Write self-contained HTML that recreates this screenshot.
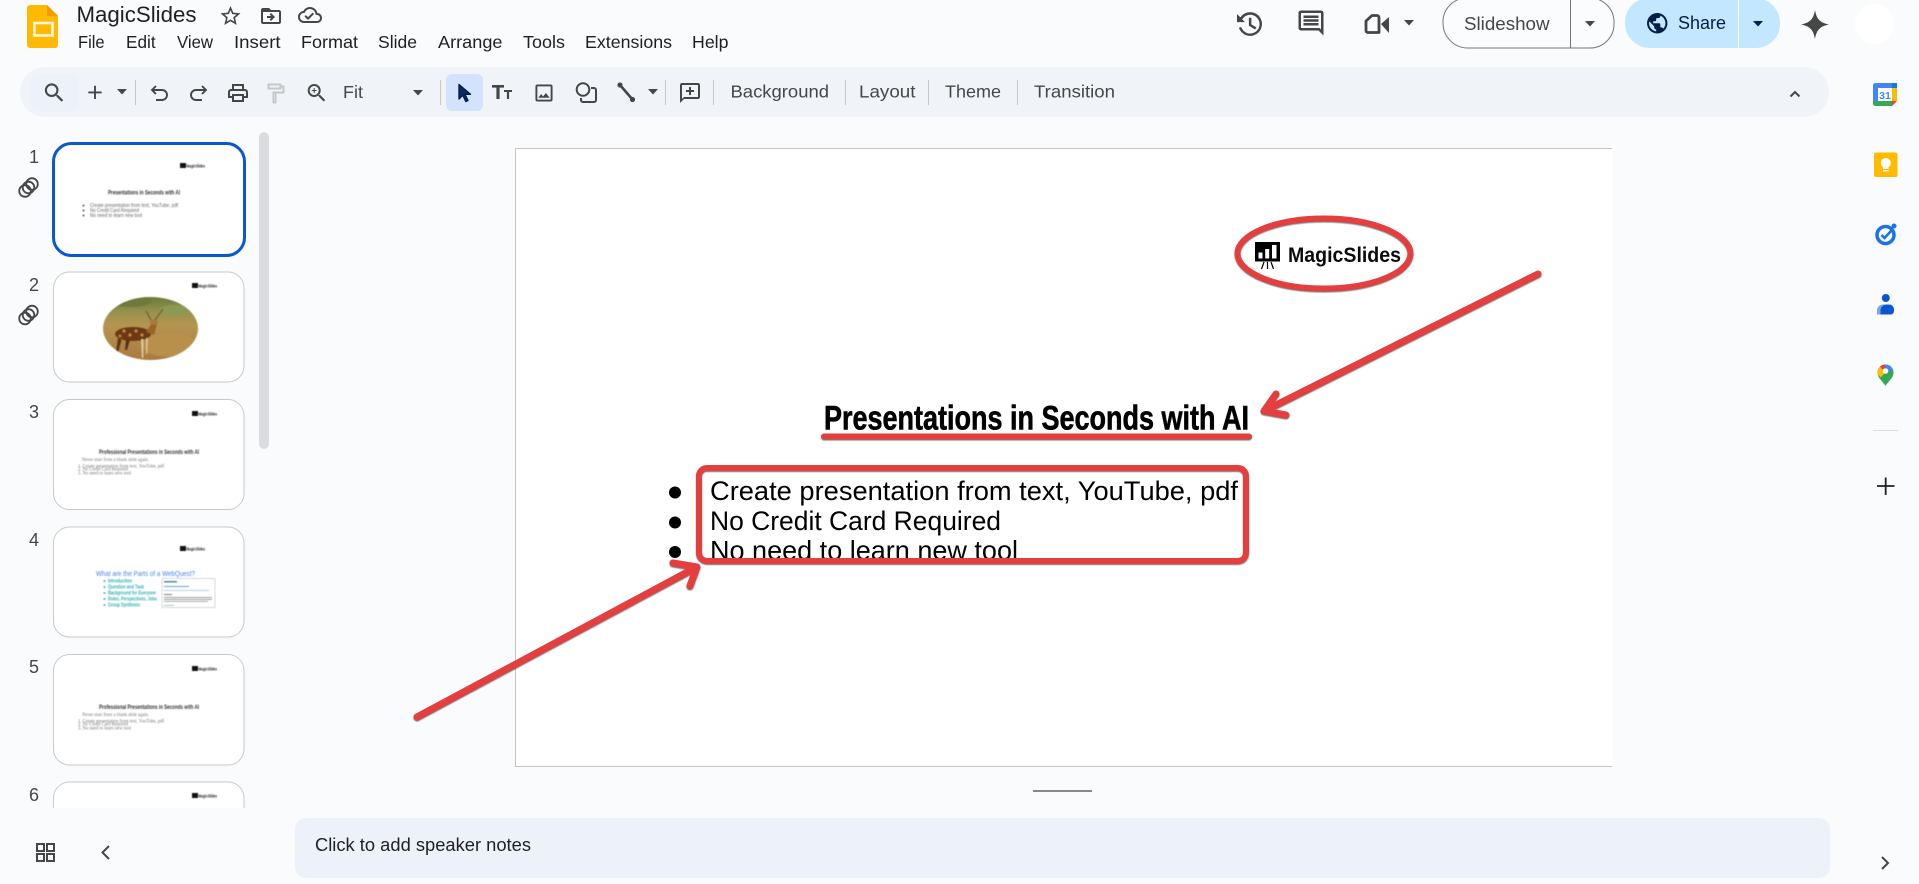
<!DOCTYPE html>
<html lang="en"><head><meta charset="utf-8"><title>MagicSlides - Google Slides</title>
<style>
html,body{margin:0;padding:0;background:#f9fbfd;width:1919px;height:884px;overflow:hidden}
svg{display:block;font-family:"Liberation Sans",Arial,sans-serif}
.m{font-size:17.500px;fill:#1f1f1f}
.t{font-size:17.500px;fill:#444746}
.i{fill:#444746}
.n{font-size:18px;fill:#444746;text-anchor:end}
.s{fill:none;stroke:#444746;stroke-width:2}
.r{filter:drop-shadow(0 1px .6px rgba(0,0,0,.55))}
.red{fill:none;stroke:#e53e3e;stroke-linecap:round;stroke-linejoin:round}
.th{fill:#fff;stroke:#c7c9cb;stroke-width:1}
.b{filter:blur(.4px)}
.lg{font-size:4.600px;font-weight:700;fill:#222}
.tt{font-weight:700;font-size:6.500px;fill:#333}
.tx{font-size:5.600px;fill:#666}
.sf{font-family:"Liberation Serif",serif;font-size:5.600px;fill:#777}
.tl{font-size:5px;fill:#2fb0b5;font-weight:700}
.sp{stroke:#c7c7c7;stroke-width:1}
</style></head><body>
<svg width="1919" height="884" viewBox="0 0 1919 884" xmlns="http://www.w3.org/2000/svg">
<rect width="1919" height="884" fill="#f9fbfd"/>

<!-- Logo -->
<path d="M30 5h17l11 11v29a3 3 0 0 1-3 3H30a3 3 0 0 1-3-3V8a3 3 0 0 1 3-3z" fill="#ffb900"/>
<path d="M47 5l11 11H47z" fill="#f29900"/>
<rect x="34.500" y="23" width="18" height="12.500" fill="none" stroke="#fff6dc" stroke-width="2.600"/>

<!-- Title and menu -->
<text x="76.500" y="22" font-size="22.500" fill="#1f1f1f" textLength="120" lengthAdjust="spacingAndGlyphs">MagicSlides</text>
<path transform="translate(218.500,4)" class="i" d="M22 9.240l-7.190-.62L12 2 9.190 8.630 2 9.240l5.460 4.730L5.820 21 12 17.270 18.180 21l-1.630-7.030L22 9.240zM12 15.400l-3.760 2.270 1-4.280-3.320-2.880 4.380-.38L12 6.100l1.710 4.040 4.380.38-3.320 2.880 1 4.280L12 15.400z"/>
<path transform="translate(259,4)" class="i" d="M20 6h-8l-2-2H4c-1.100 0-1.990.9-1.990 2L2 18c0 1.100.9 2 2 2h16c1.100 0 2-.9 2-2V8c0-1.100-.9-2-2-2zm0 12H4V8h16v10zm-8.010-9l-1.410 1.410L12.160 12H8v2h4.160l-1.590 1.590L11.990 17 16 13.010 11.990 9z"/>
<path transform="translate(298,3)" class="i" d="M19.350 10.040C18.670 6.590 15.640 4 12 4 9.110 4 6.600 5.640 5.350 8.040 2.340 8.360 0 10.910 0 14c0 3.310 2.690 6 6 6h13c2.760 0 5-2.240 5-5 0-2.640-2.050-4.780-4.650-4.960zM19 18H6c-2.210 0-4-1.790-4-4 0-2.050 1.530-3.760 3.560-3.970l1.070-.11.5-.95C8.080 7.140 9.940 6 12 6c2.620 0 4.880 1.860 5.390 4.430l.3 1.500 1.530.11c1.560.1 2.780 1.410 2.780 2.960 0 1.650-1.350 3-3 3zm-9-3.820l-2.090-2.090L6.500 13.500 10 17l6.010-6.010-1.410-1.410z"/>
<text class="m" x="78" y="48" textLength="26.600" lengthAdjust="spacingAndGlyphs">File</text>
<text class="m" x="126" y="48" textLength="29.600" lengthAdjust="spacingAndGlyphs">Edit</text>
<text class="m" x="177" y="48" textLength="36" lengthAdjust="spacingAndGlyphs">View</text>
<text class="m" x="234" y="48" textLength="46.600" lengthAdjust="spacingAndGlyphs">Insert</text>
<text class="m" x="301" y="48" textLength="57" lengthAdjust="spacingAndGlyphs">Format</text>
<text class="m" x="378" y="48" textLength="39" lengthAdjust="spacingAndGlyphs">Slide</text>
<text class="m" x="438" y="48" textLength="64.500" lengthAdjust="spacingAndGlyphs">Arrange</text>
<text class="m" x="523" y="48" textLength="42" lengthAdjust="spacingAndGlyphs">Tools</text>
<text class="m" x="585" y="48" textLength="87" lengthAdjust="spacingAndGlyphs">Extensions</text>
<text class="m" x="692" y="48" textLength="36.500" lengthAdjust="spacingAndGlyphs">Help</text>

<!-- Top right -->
<path transform="translate(1234.500,9) scale(1.25)" class="i" d="M12.500 2.500a9.500 9.500 0 1 1-9 12.500l1.900-.6a7.500 7.500 0 1 0 .7-6.100L8.500 10.500H2V4l2.700 2.700A9.500 9.500 0 0 1 12.500 2.500zM11.500 7h2v5.300l4 2.400-1 1.700-5-3z"/>
<path transform="translate(1296,8) scale(1.25)" class="i" d="M20 2H4c-1.100 0-2 .9-2 2v12c0 1.100.9 2 2 2h14l4 4V4c0-1.100-.9-2-2-2zm0 15.170L18.830 16H4V4h16v13.170zM6 12h12v2H6zm0-3h12v2H6zm0-3h12v2H6z"/>
<path d="M1372 15.500h5a2 2 0 0 1 2 2v15h-11a2 2 0 0 1-2-2V21z" fill="none" stroke="#444746" stroke-width="2.800" stroke-linejoin="round"/>
<path d="M1381 24l8-7v16z" fill="#444746"/>
<path d="M1404 20h10l-5 5.500z" fill="#444746"/>
<path d="M1468-2h122a24 24 0 0 1 24 24v2a24 24 0 0 1-24 24h-122a25 25 0 0 1-25-25v-1a24 24 0 0 1 25-24z" fill="#fbfcfe" stroke="#747775" stroke-width="1"/>
<line x1="1570.500" y1="-2" x2="1570.500" y2="48" stroke="#747775" stroke-width="1"/>
<text x="1464" y="30" font-size="18" fill="#444746" textLength="85.500" lengthAdjust="spacingAndGlyphs">Slideshow</text>
<path d="M1585 21h10l-5 5.500z" fill="#444746"/>
<path d="M1650-2h105a25 25 0 0 1 25 25v1a24 24 0 0 1-24 24h-106a25 25 0 0 1-25-25v-1a24 24 0 0 1 25-24z" fill="#c2e7ff"/>
<line x1="1738.500" y1="-2" x2="1738.500" y2="48" stroke="#f9fbfd" stroke-width="1"/>
<path transform="translate(1645,11) scale(1.02)" fill="#041e49" d="M12 2C6.480 2 2 6.480 2 12s4.480 10 10 10 10-4.480 10-10S17.520 2 12 2zm-1 17.930c-3.950-.49-7-3.850-7-7.930 0-.62.08-1.210.21-1.790L9 15v1c0 1.100.9 2 2 2v1.930zm6.900-2.540c-.26-.81-1-1.390-1.900-1.390h-1v-3c0-.55-.45-1-1-1H8v-2h2c.55 0 1-.45 1-1V7h2c1.100 0 2-.9 2-2v-.41c2.930 1.190 5 4.060 5 7.410 0 2.080-.8 3.970-2.100 5.390z"/>
<text x="1678" y="29" font-size="18" fill="#041e49" textLength="48" lengthAdjust="spacingAndGlyphs">Share</text>
<path d="M1753 21h10l-5 5.500z" fill="#041e49"/>
<path d="M1815 10c1.500 9 5 12.800 14 14.500-9 1.700-12.500 5.500-14 14.500-1.500-9-5-12.800-14-14.500 9-1.700 12.500-5.500 14-14.500z" fill="#444746"/>
<ellipse cx="1874.500" cy="24" rx="19.500" ry="20" fill="#fff"/>

<!-- Toolbar -->
<rect x="20" y="67" width="1809" height="50" rx="25" fill="#f0f4f9"/>
<rect x="31" y="74" width="48" height="37" rx="6" fill="#edf2fa"/>
<path transform="translate(41.700,80.200) scale(1.05)" class="i" d="M15.500 14h-.79l-.28-.27A6.471 6.471 0 0 0 16 9.500 6.500 6.500 0 1 0 9.500 16c1.610 0 3.090-.59 4.230-1.570l.27.28v.79l5 4.990L20.490 19l-4.990-5zm-6 0C7.010 14 5 11.990 5 9.500S7.010 5 9.500 5 14 7.010 14 9.500 11.990 14 9.500 14z"/>
<path transform="translate(83.600,81) scale(.95)" class="i" d="M19 13h-6v6h-2v-6H5v-2h6V5h2v6h6v2z"/>
<path d="M117 89h10l-5 5.500z" class="i"/>
<line x1="135.500" y1="80" x2="135.500" y2="105" class="sp"/>
<path d="M156 86l-4 4 4 4M152 90h10a5 5 0 0 1 0 10h-6" fill="none" stroke="#444746" stroke-width="1.900"/>
<path d="M202 86l4 4-4 4M206 90h-10a5 5 0 0 0 0 10h6" fill="none" stroke="#444746" stroke-width="1.900"/>
<path transform="translate(226,81)" class="i" d="M19 8h-1V3H6v5H5c-1.660 0-3 1.340-3 3v6h4v4h12v-4h4v-6c0-1.660-1.340-3-3-3zM8 5h8v3H8V5zm8 12v2H8v-4h8v2zm2-2v-2H6v2H4v-4c0-.55.45-1 1-1h14c.55 0 1 .45 1 1v4h-2z"/>
<path transform="translate(263.500,81.500)" fill="#c4c7c5" d="M18 4V3c0-.55-.45-1-1-1H5c-.55 0-1 .45-1 1v4c0 .55.45 1 1 1h12c.55 0 1-.45 1-1V6h1v4H9v11c0 .55.45 1 1 1h2c.55 0 1-.45 1-1v-9h8V4h-3zM16 6H6V4h10v2zM11 20h-.5v-8h.5z"/>
<path transform="translate(304.700,81)" class="i" d="M15.500 14h-.79l-.28-.27A6.471 6.471 0 0 0 16 9.500 6.500 6.500 0 1 0 9.500 16c1.610 0 3.090-.59 4.230-1.570l.27.28v.79l5 4.990L20.490 19l-4.990-5zm-6 0C7.010 14 5 11.990 5 9.500S7.010 5 9.500 5 14 7.010 14 9.500 11.990 14 9.500 14zM12 10h-2v2H9v-2H7V9h2V7h1v2h2v1z"/>
<text class="t" x="343" y="98" textLength="20" lengthAdjust="spacingAndGlyphs">Fit</text>
<path d="M413 90h10l-5 5.500z" class="i"/>
<line x1="440.500" y1="80" x2="440.500" y2="105" class="sp"/>
<rect x="446" y="74" width="37" height="37" rx="6" fill="#d3e3fd"/>
<path d="M459 84.500l0 14.500 3.800-3.800 3 6.300 2.200-1-3-6.200 5.500 0z" fill="#0b2a5b" stroke="#041e49" stroke-width="1.400" stroke-linejoin="round"/>
<path d="M492 85h12v2.600h-4.400V99h-3.200V87.600H492zM504 90h8v2h-2.900v7h-2.200v-7H504z" class="i"/>
<path transform="translate(532.600,81.600) scale(.95)" class="i" d="M19 3H5c-1.100 0-2 .9-2 2v14c0 1.100.9 2 2 2h14c1.100 0 2-.9 2-2V5c0-1.100-.9-2-2-2zm0 16H5V5h14v14zm-5-7l-3 3.720L9 13l-3 4h12l-4-5z"/>
<circle cx="583" cy="89.500" r="6.300" class="s" stroke-width="1.800"/>
<path d="M591 88h3a2 2 0 0 1 2 2v10a2 2 0 0 1-2 2h-11a2 2 0 0 1-2-2v-2" class="s" stroke-width="1.800"/>
<path d="M620 85l12.500 14.500" stroke="#444746" stroke-width="2.600"/>
<circle cx="620" cy="85" r="2.600" class="i"/><circle cx="632.500" cy="99.500" r="2.600" class="i"/>
<path d="M648 89h10l-5 5.500z" class="i"/>
<line x1="665.500" y1="80" x2="665.500" y2="105" class="sp"/>
<path transform="translate(678,81)" class="i" d="M20 2H4c-1.100 0-2 .9-2 2v18l4-4h14c1.100 0 2-.9 2-2V4c0-1.100-.9-2-2-2zm0 14H6l-2 2V4h16v12zM13 6h-2v3H8v2h3v3h2v-3h3V9h-3z"/>
<line x1="713.500" y1="80" x2="713.500" y2="105" class="sp"/>
<text class="t" x="730.500" y="97.500" textLength="98.500" lengthAdjust="spacingAndGlyphs">Background</text>
<line x1="845.500" y1="80" x2="845.500" y2="105" class="sp"/>
<text class="t" x="859" y="97.500" textLength="56.500" lengthAdjust="spacingAndGlyphs">Layout</text>
<line x1="928.500" y1="80" x2="928.500" y2="105" class="sp"/>
<text class="t" x="945" y="97.500" textLength="56" lengthAdjust="spacingAndGlyphs">Theme</text>
<line x1="1017.500" y1="80" x2="1017.500" y2="105" class="sp"/>
<text class="t" x="1034" y="97.500" textLength="81" lengthAdjust="spacingAndGlyphs">Transition</text>
<path d="M1790.500 96.500l4.500-4.500 4.500 4.500" class="s"/>

<!-- Sidebar -->
<rect x="259" y="132" width="10" height="317" rx="5" fill="#dadce0"/>
<text class="n" x="39" y="163">1</text>
<text class="n" x="39" y="291">2</text>
<text class="n" x="39" y="418">3</text>
<text class="n" x="39" y="546">4</text>
<text class="n" x="39" y="673">5</text>
<text class="n" x="39" y="801">6</text>
<g fill="none" stroke="#444746" stroke-width="1.800">
<circle cx="25" cy="191" r="5.800"/><circle cx="28.500" cy="187.500" r="5.800"/><circle cx="32" cy="184" r="5.800"/>
<circle cx="25" cy="318.500" r="5.800"/><circle cx="28.500" cy="315" r="5.800"/><circle cx="32" cy="311.500" r="5.800"/>
</g>

<!-- Thumb 1 -->
<rect x="53.500" y="143.500" width="191" height="112" rx="18" fill="#fff" stroke="#0b57d0" stroke-width="3"/>
<g class="b">
<rect x="180" y="163" width="6" height="5" fill="#111"/><text class="lg" x="186.500" y="167.500" textLength="18.500" lengthAdjust="spacingAndGlyphs">MagicSlides</text>
<text class="tt" x="108" y="194.500" textLength="72" lengthAdjust="spacingAndGlyphs">Presentations in Seconds with AI</text>
<text class="tx" x="90" y="207" textLength="88" lengthAdjust="spacingAndGlyphs">Create presentation from text, YouTube, pdf</text>
<text class="tx" x="90" y="212" textLength="49" lengthAdjust="spacingAndGlyphs">No Credit Card Required</text>
<text class="tx" x="90" y="217" textLength="52" lengthAdjust="spacingAndGlyphs">No need to learn new tool</text>
<circle cx="83.500" cy="205.500" r="1" fill="#555"/><circle cx="83.500" cy="210.500" r="1" fill="#555"/><circle cx="83.500" cy="215.500" r="1" fill="#555"/>
</g>

<!-- Thumb 2 -->
<rect x="53.500" y="272" width="190.500" height="110" rx="16" class="th"/>
<defs>
<linearGradient id="ph" x1="0" y1="0" x2="0" y2="1"><stop offset="0" stop-color="#6e7a3a"/><stop offset=".25" stop-color="#98934f"/><stop offset=".45" stop-color="#b59550"/><stop offset="1" stop-color="#a97a3c"/></linearGradient>
<clipPath id="el"><ellipse cx="150.500" cy="328.500" rx="47.500" ry="31.500"/></clipPath>
</defs>
<g class="b">
<rect x="192" y="283" width="6" height="5" fill="#111"/><text class="lg" x="198.500" y="287.500" textLength="18.500" lengthAdjust="spacingAndGlyphs">MagicSlides</text>
<ellipse cx="150.500" cy="328.500" rx="47.500" ry="31.500" fill="url(#ph)"/>
<g clip-path="url(#el)">
<ellipse cx="130" cy="301" rx="22" ry="6" fill="#6d7a3c"/><ellipse cx="175" cy="310" rx="16" ry="5" fill="#8a9a55"/>
<ellipse cx="170" cy="345" rx="28" ry="12" fill="#b98f4c"/>
<ellipse cx="133" cy="334" rx="18" ry="7" fill="#6b3a14"/>
<circle cx="124" cy="331" r="1.600" fill="#c98a3a"/><circle cx="130" cy="335" r="1.600" fill="#c98a3a"/><circle cx="136" cy="331" r="1.600" fill="#c98a3a"/><circle cx="142" cy="335" r="1.600" fill="#c98a3a"/><circle cx="120" cy="336" r="1.400" fill="#c98a3a"/>
<path d="M118 338l-2 14 2 1 3.500-13zM126 339l-1 11 2 0 3-10z" fill="#5a3215"/>
<path d="M141 339l.8 19h1.600l.1-19zM146 338l0 16h1.200l.8-16z" fill="#d8c8a0"/>
<path d="M146 332l6-9 5 1-3 11z" fill="#9a6426"/>
<ellipse cx="154" cy="322" rx="4" ry="2.800" fill="#a97a3c"/>
<path d="M155 320l8-11M151 320l-5-9" stroke="#6b4a25" stroke-width=".9" fill="none"/>
</g>
</g>

<!-- Thumb 3 -->
<rect x="53.500" y="399.500" width="190.500" height="110" rx="16" class="th"/>
<g class="b">
<rect x="192" y="411" width="6" height="5" fill="#111"/><text class="lg" x="198.500" y="415.500" textLength="18.500" lengthAdjust="spacingAndGlyphs">MagicSlides</text>
<text class="tt" x="99" y="454" textLength="100" lengthAdjust="spacingAndGlyphs">Professional Presentations in Seconds with AI</text>
<text class="sf" x="82" y="461" textLength="67" lengthAdjust="spacingAndGlyphs">Never start from a blank slide again.</text>
<text class="sf" x="78" y="467.500" textLength="86" lengthAdjust="spacingAndGlyphs">1. Create presentation from text, YouTube, pdf</text>
<text class="sf" x="78" y="470.500" textLength="50" lengthAdjust="spacingAndGlyphs">2. No Credit Card Required</text>
<text class="sf" x="78" y="474.500" textLength="53" lengthAdjust="spacingAndGlyphs">3. No need to learn new tool</text>
</g>

<!-- Thumb 4 -->
<rect x="53.500" y="527" width="190.500" height="110" rx="16" class="th"/>
<g class="b">
<rect x="180" y="546" width="6" height="5" fill="#111"/><text class="lg" x="186.500" y="550.500" textLength="18.500" lengthAdjust="spacingAndGlyphs">MagicSlides</text>
<text x="96" y="576" font-size="7.500" fill="#4a86e8" textLength="99" lengthAdjust="spacingAndGlyphs">What are the Parts of a WebQuest?</text>
<text class="tl" x="108" y="582.500" textLength="24" lengthAdjust="spacingAndGlyphs">Introduction</text>
<text class="tl" x="108" y="588.500" textLength="36" lengthAdjust="spacingAndGlyphs">Question and Task</text>
<text class="tl" x="108" y="594.500" textLength="48" lengthAdjust="spacingAndGlyphs">Background for Everyone</text>
<text class="tl" x="108" y="600.500" textLength="49" lengthAdjust="spacingAndGlyphs">Roles, Perspectives, Jobs</text>
<text class="tl" x="108" y="606.500" textLength="32" lengthAdjust="spacingAndGlyphs">Group Synthesis</text>
<circle cx="104.500" cy="581" r="1" fill="#2fb0b5"/><circle cx="104.500" cy="587" r="1" fill="#2fb0b5"/><circle cx="104.500" cy="593" r="1" fill="#2fb0b5"/><circle cx="104.500" cy="599" r="1" fill="#2fb0b5"/><circle cx="104.500" cy="605" r="1" fill="#2fb0b5"/>
<rect x="162" y="578.500" width="53" height="29" fill="#fff" stroke="#d5d8dc"/>
<rect x="164" y="581" width="13" height="1.500" fill="#4a86a8"/><rect x="164" y="586" width="25" height="1" fill="#6b9bc8"/><rect x="164" y="590" width="45" height=".8" fill="#a9c4de"/><rect x="164" y="594" width="8" height="1" fill="#777"/>
<rect x="164" y="597" width="48" height=".8" fill="#888"/><rect x="164" y="599" width="48" height=".8" fill="#888"/><rect x="164" y="601" width="44" height=".8" fill="#999"/><rect x="164" y="605" width="10" height=".8" fill="#9bb"/>
</g>

<!-- Thumb 5 -->
<rect x="53.500" y="654.500" width="190.500" height="110.500" rx="16" class="th"/>
<g class="b">
<rect x="192" y="666" width="6" height="5" fill="#111"/><text class="lg" x="198.500" y="670.500" textLength="18.500" lengthAdjust="spacingAndGlyphs">MagicSlides</text>
<text class="tt" x="99" y="709" textLength="100" lengthAdjust="spacingAndGlyphs">Professional Presentations in Seconds with AI</text>
<text class="sf" x="82" y="716" textLength="67" lengthAdjust="spacingAndGlyphs">Never start from a blank slide again.</text>
<text class="sf" x="78" y="722.500" textLength="86" lengthAdjust="spacingAndGlyphs">1. Create presentation from text, YouTube, pdf</text>
<text class="sf" x="78" y="725.500" textLength="50" lengthAdjust="spacingAndGlyphs">2. No Credit Card Required</text>
<text class="sf" x="78" y="729.500" textLength="53" lengthAdjust="spacingAndGlyphs">3. No need to learn new tool</text>
</g>

<!-- Thumb 6 -->
<rect x="53.500" y="782" width="190.500" height="110" rx="16" class="th"/>
<g class="b">
<rect x="192" y="793" width="6" height="5" fill="#111"/><text class="lg" x="198.500" y="797.500" textLength="18.500" lengthAdjust="spacingAndGlyphs">MagicSlides</text>
</g>
<rect x="0" y="808" width="290" height="76" fill="#f9fbfd"/>

<!-- Bottom controls -->
<path d="M37 844h7v7h-7zM47 844h7v7h-7zM37 854h7v7h-7zM47 854h7v7h-7z" fill="none" stroke="#444746" stroke-width="2"/>
<path d="M109 846l-6.500 6.500 6.500 6.500" class="s"/>
<rect x="295" y="818" width="1535" height="60" rx="11" fill="#edf2fa"/>
<text x="315" y="851" font-size="18" fill="#1f1f1f" textLength="216" lengthAdjust="spacingAndGlyphs">Click to add speaker notes</text>

<!-- Slide -->
<rect x="515.500" y="148.500" width="1097" height="618" fill="#fff"/>
<path d="M1612 148.500H515.500V766.500H1612" fill="none" stroke="#c4c4c4"/>
<line x1="1033" y1="791" x2="1092" y2="791" stroke="#444" stroke-width="1.200"/>

<text x="710" y="500" font-size="27" fill="#000" textLength="528" lengthAdjust="spacingAndGlyphs">Create presentation from text, YouTube, pdf</text>
<text x="710" y="530" font-size="27" fill="#000" textLength="291" lengthAdjust="spacingAndGlyphs">No Credit Card Required</text>
<text x="710" y="559.500" font-size="27" fill="#000" textLength="308" lengthAdjust="spacingAndGlyphs">No need to learn new tool</text>
<circle cx="675" cy="492.500" r="6"/><circle cx="675" cy="522.500" r="6"/><circle cx="675" cy="552" r="6"/>
<text x="824" y="429.500" font-size="34" font-weight="700" fill="#000" stroke="#000" stroke-width=".6" textLength="425" lengthAdjust="spacingAndGlyphs">Presentations in Seconds with AI</text>

<rect x="1255" y="242" width="25" height="19.500" fill="#000"/>
<rect x="1258.500" y="252.500" width="4" height="6" fill="#fff"/><rect x="1265.200" y="249" width="4" height="9.500" fill="#fff"/><rect x="1272" y="245" width="4.500" height="13.500" fill="#fff"/>
<path d="M1264 262l-2.500 7M1267.500 262v7M1271 262l2.500 7" stroke="#000" stroke-width="1.200"/>
<text x="1288" y="262" font-size="21" font-weight="700" fill="#0b0b0b" textLength="113" lengthAdjust="spacingAndGlyphs">MagicSlides</text>

<!-- Annotations -->
<g class="r">
<ellipse cx="1324" cy="253.500" rx="86.500" ry="35" class="red" stroke-width="6"/>
<path d="M1538 274L1266 410M1276 394L1264 411L1286 415" class="red" stroke-width="7"/>
<path d="M824 436.500H1249" class="red" stroke-width="6"/>
<rect x="699" y="468" width="547" height="93" rx="8" class="red" stroke-width="6"/>
<path d="M417 717L693 569M673 563L697 567L690 586" class="red" stroke-width="7"/>
</g>

<!-- Right rail -->
<path d="M1873 85.500a2.500 2.500 0 0 1 2.500-2.500H1892v5h-14v13h-5z" fill="#4285f4"/>
<rect x="1892" y="83" width="5" height="5" fill="#1a73e8"/>
<rect x="1892" y="88" width="5" height="13" fill="#fbbc04"/>
<path d="M1873 101h19v5h-16.500a2.500 2.500 0 0 1-2.500-2.500z" fill="#34a853"/>
<path d="M1892 101h5l-5 5z" fill="#ea4335"/>
<rect x="1878" y="88" width="14" height="13" fill="#fff"/>
<text x="1885" y="99" font-size="10.500" font-weight="700" fill="#4285f4" text-anchor="middle">31</text>
<rect x="1874" y="152.500" width="23.500" height="24.500" rx="2" fill="#ffbb00"/>
<circle cx="1885.800" cy="163" r="5" fill="#fff"/><rect x="1883" y="167" width="5.500" height="2" fill="#fff"/><rect x="1883" y="170" width="5.500" height="1.500" fill="#fff"/>
<circle cx="1885.500" cy="235" r="8.500" fill="none" stroke="#1a73e8" stroke-width="3.500"/>
<path d="M1881.500 235l3 3 7.500-8" fill="none" stroke="#1a73e8" stroke-width="2.600"/>
<circle cx="1894" cy="226" r="2.500" fill="#1a73e8"/>
<circle cx="1885.800" cy="298" r="4" fill="#0b57d0"/>
<path d="M1877 314.500v-4a6 6 0 0 1 6-6h6a5 5 0 0 1 5 5v1.500a3.500 3.500 0 0 1-3.500 3.500z" fill="#7ba6ec"/>
<path d="M1880.500 314.500v-4a6 6 0 0 1 6-6h2.500a5 5 0 0 1 5 5v1.500a3.500 3.500 0 0 1-3.500 3.500z" fill="#0b57d0"/>
<path d="M1885.500 386c-3-5-8-8-8-13.500a8 8 0 0 1 16 0c0 5.500-5 8.500-8 13.500z" fill="#34a853"/>
<path d="M1877.500 372.500a8 8 0 0 1 2.500-6l5.500 6-5 5c-1.500-1.500-3-3-3-5z" fill="#fbbc04"/>
<path d="M1880 366.500a8 8 0 0 1 5.500-2v8z" fill="#ea4335"/>
<path d="M1885 364.500a8 8 0 0 1 8 5l-7.500 3z" fill="#4285f4"/>
<circle cx="1885.500" cy="371" r="2.800" fill="#fff"/>
<line x1="1873" y1="430.500" x2="1898" y2="430.500" stroke="#dadce0"/>
<path d="M1877 486h17.500M1885.700 477.500v17.500" stroke="#1f1f1f" stroke-width="1.800" fill="none"/>
<path d="M1882 857l6 6-6 6" class="s"/>
</svg>
</body></html>
